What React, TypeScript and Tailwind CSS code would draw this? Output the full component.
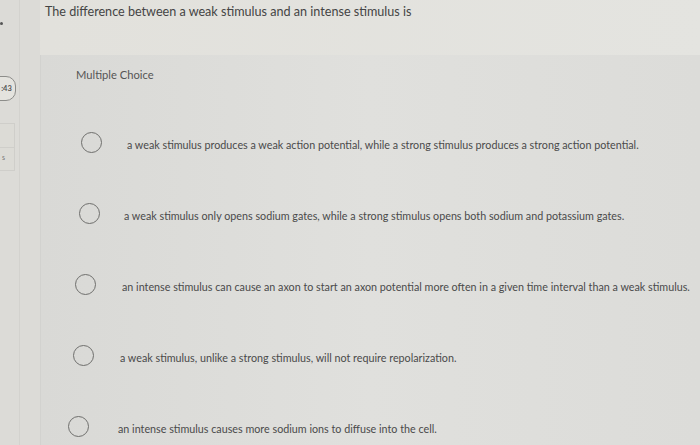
const options = [
  { text: 'a weak stimulus produces a weak action potential, while a strong stimulus produces a strong action potential.', ml: 'ml-[40px]', gap: 'gap-[25px]' },
  { text: 'a weak stimulus only opens sodium gates, while a strong stimulus opens both sodium and potassium gates.', ml: 'ml-[38px]', gap: 'gap-[24px]' },
  { text: 'an intense stimulus can cause an axon to start an axon potential more often in a given time interval than a weak stimulus.', ml: 'ml-[34px]', gap: 'gap-[26px]' },
  { text: 'a weak stimulus, unlike a strong stimulus, will not require repolarization.', ml: 'ml-[32px]', gap: 'gap-[26px]' },
  { text: 'an intense stimulus causes more sodium ions to diffuse into the cell.', ml: 'ml-[27px]', gap: 'gap-[29px]' },
];

export default function App() {
  return (
    <div className="w-[700px] h-[445px] overflow-hidden flex bg-[#e3e2dd] text-[#4b4b4b] font-['Lato',sans-serif]">
      <div className="w-[40px] shrink-0 bg-[#dcdbd7] flex">
        <div className="w-[20px] shrink-0 border-r border-[#d3d2ce] flex flex-col">
          <div className="h-[22px]" />
          <div className="w-[3px] h-[3px] bg-[#555] rounded-full" />
          <div className="h-[51px]" />
          <div className="w-[19px] h-[25px] -ml-[3px] border border-[#8d8d8a] rounded-r-[10px] bg-[#e4e3de] flex items-center justify-center text-[7.5px] font-bold text-[#555]">:43</div>
          <div className="h-[22px]" />
          <div className="w-[15px] h-[48px] border-r border-y border-[#cfceca] bg-[#dcdbd6] flex flex-col">
            <div className="h-[24px] border-b border-[#cfceca]" />
            <div className="text-[7px] text-[#777] pl-[2px] pt-[4px]">s</div>
          </div>
        </div>
      </div>
      <div className="flex-1 flex flex-col">
        <div className="h-[55px] bg-gradient-to-r from-[#e2e1dc] to-[#e4e4e0] pl-[5px] pt-[3px]">
          <p className="text-[12.6px] leading-[18px] text-[#444]">The difference between a weak stimulus and an intense stimulus is</p>
        </div>
        <div className="flex-1 bg-gradient-to-r from-[#d9d9d6] via-[#e0e0dd] to-[#dcdcd9] border-l border-[#d2d2cf] flex flex-col">
          <p className="pl-[35px] pt-[12px] text-[11.2px] leading-[16px] text-[#555]">Multiple Choice</p>
          <div className="flex flex-col pt-[49px] gap-[51px]">
            {options.map((o, i) => (
              <div key={i} className={`flex items-center ${o.ml} ${o.gap} h-[20px]`}>
                <div className="w-[21px] h-[21px] rounded-full border border-[#6f6f6d] shrink-0" />
                <span className="text-[10.75px] leading-[14px] text-[#4a4a4a] whitespace-nowrap pt-[6px]">{o.text}</span>
              </div>
            ))}
          </div>
        </div>
      </div>
    </div>
  );
}
